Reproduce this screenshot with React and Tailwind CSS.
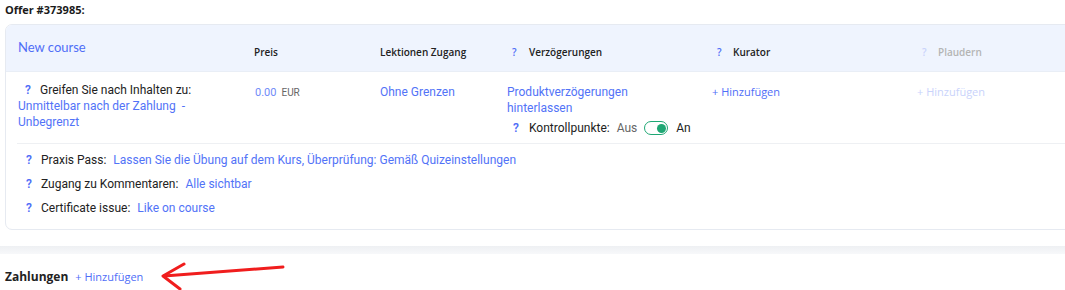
import React from "react";

const body = { fontFamily: "Roboto, 'Liberation Sans', sans-serif" };
const head = { fontFamily: "'Open Sans', 'DejaVu Sans', sans-serif" };

function Q({faded = false, className = ""}) {
    return (
        <span className={`inline-block font-semibold ${faded ? "text-[#c9d3fb]" : "text-[#4f6ef7]"} ${className}`}>?</span>
    );
}

function Toggle() {
    return (
        <span className="inline-flex items-center justify-end w-[24px] h-[14px] rounded-full
                         border-[1.5px] border-[#1fa774] bg-white px-[1.5px]">
            <span className="block w-[9px] h-[9px] rounded-full bg-[#1fa774]"/>
        </span>
    );
}

function OptionRow({label, value}) {
    return (
        <div className="flex items-center h-[24px] text-[12px]">
            <Q className="w-[16px] pl-[1px]"/>
            <span className="text-[#222]">{label}</span>
            <span className="ml-[7px] text-[#5273f7]">{value}</span>
        </div>
    );
}

function OfferCard() {
    return (
        <div className="w-[1080px] ml-[5px] mt-[7px] rounded-[7px] border border-[#e6eaf1] overflow-hidden bg-white">
            <div className="grid grid-cols-[236px_126px_127px_205px_205px_1fr] items-center h-[47px] pl-[12px]
                            bg-[#eff4fe] border-b border-[#e9eef6]"
                 style={head}>
                <div className="text-[13px] text-[#4f6ef7] pb-[1px]" style={{fontFamily: "Lato, sans-serif"}}>New course</div>
                <div className="text-[10px] font-semibold text-[#222] pt-[8px]">Preis</div>
                <div className="text-[10px] font-semibold text-[#222] pt-[8px]">Lektionen Zugang</div>
                <div className="text-[10px] font-semibold text-[#222] pt-[8px] pl-[5px]">
                    <Q className="w-[17px]"/>Verzögerungen
                </div>
                <div className="text-[10px] font-semibold text-[#222] pt-[8px] pl-[5px]">
                    <Q className="w-[16px]"/>Kurator
                </div>
                <div className="text-[10px] font-semibold text-[#b4b4b4] pt-[8px] pl-[5px]">
                    <Q faded className="w-[16px]"/>Plaudern
                </div>
            </div>

            <div className="grid grid-cols-[236px_126px_127px_205px_205px_1fr] pl-[12px] pt-[10px] h-[71px]
                            text-[12px] leading-[16px]"
                 style={body}>
                <div>
                    <div className="pl-[7px] flex">
                        <Q className="w-[15px]"/>
                        <span className="text-[#222]">Greifen Sie nach Inhalten zu:</span>
                    </div>
                    <div className="text-[#5273f7]">
                        Unmittelbar nach der Zahlung <span className="ml-[3px]">-</span><br/>Unbegrenzt
                    </div>
                </div>
                <div className="pt-[2px] pl-[1px]">
                    <span className="text-[11px] text-[#6f8af8]">0.00</span>
                    <span className="ml-[5px] text-[10px] text-[#666]">EUR</span>
                </div>
                <div className="pt-[2px] text-[#5273f7]">Ohne Grenzen</div>
                <div className="pt-[2px]">
                    <div className="text-[#5273f7]">Produktverzögerungen<br/>hinterlassen</div>
                    <div className="flex items-center mt-[4px] pl-[6px]">
                        <Q className="w-[16px]"/>
                        <span className="text-[#222]">Kontrollpunkte:</span>
                        <span className="ml-[7px] mr-[7px] text-[#666]">Aus</span>
                        <Toggle/>
                        <span className="ml-[8px] text-[#222]">An</span>
                    </div>
                </div>
                <div className="pt-[2px] text-[11px] text-[#4f6ef7]" style={head}>+ Hinzufügen</div>
                <div className="pt-[2px] text-[11px] text-[#c9d3fb]" style={head}>+ Hinzufügen</div>
            </div>

            <div className="ml-[11px] border-t border-[#eef0f3]"/>

            <div className="pl-[19px] pt-[4px] pb-[9px]" style={body}>
                <OptionRow label="Praxis Pass:" value="Lassen Sie die Übung auf dem Kurs, Überprüfung: Gemäß Quizeinstellungen"/>
                <OptionRow label="Zugang zu Kommentaren:" value="Alle sichtbar"/>
                <OptionRow label="Certificate issue:" value="Like on course"/>
            </div>
        </div>
    );
}

function Arrow() {
    return (
        <svg className="absolute left-[150px] top-[258px]" width="150" height="32" viewBox="0 0 150 32">
            <path d="M133 9 L14 18" stroke="#f01d1d" strokeWidth="3" strokeLinecap="round" fill="none"/>
            <path d="M34 6 L13 18 L30 31" stroke="#f01d1d" strokeWidth="3" strokeLinecap="round"
                  strokeLinejoin="round" fill="none"/>
        </svg>
    );
}

export default function App() {
    return (
        <div className="relative w-[1065px] h-[290px] overflow-hidden bg-white">
            <div className="pl-[5px] pt-[3px] text-[11px] font-bold text-[#1a1a1a] leading-[14px]" style={head}>
                Offer #373985:
            </div>
            <OfferCard/>
            <div className="mt-[16px] h-[8px] bg-gradient-to-b from-[#eef0f3] to-[#f7f8fa]"/>
            <div className="flex items-baseline pl-[5px] pt-[14px]" style={head}>
                <span className="text-[12px] font-bold text-[#222]">Zahlungen</span>
                <span className="ml-[7px] text-[11px] text-[#4f6ef7]">+ Hinzufügen</span>
            </div>
            <Arrow/>
        </div>
    );
}
